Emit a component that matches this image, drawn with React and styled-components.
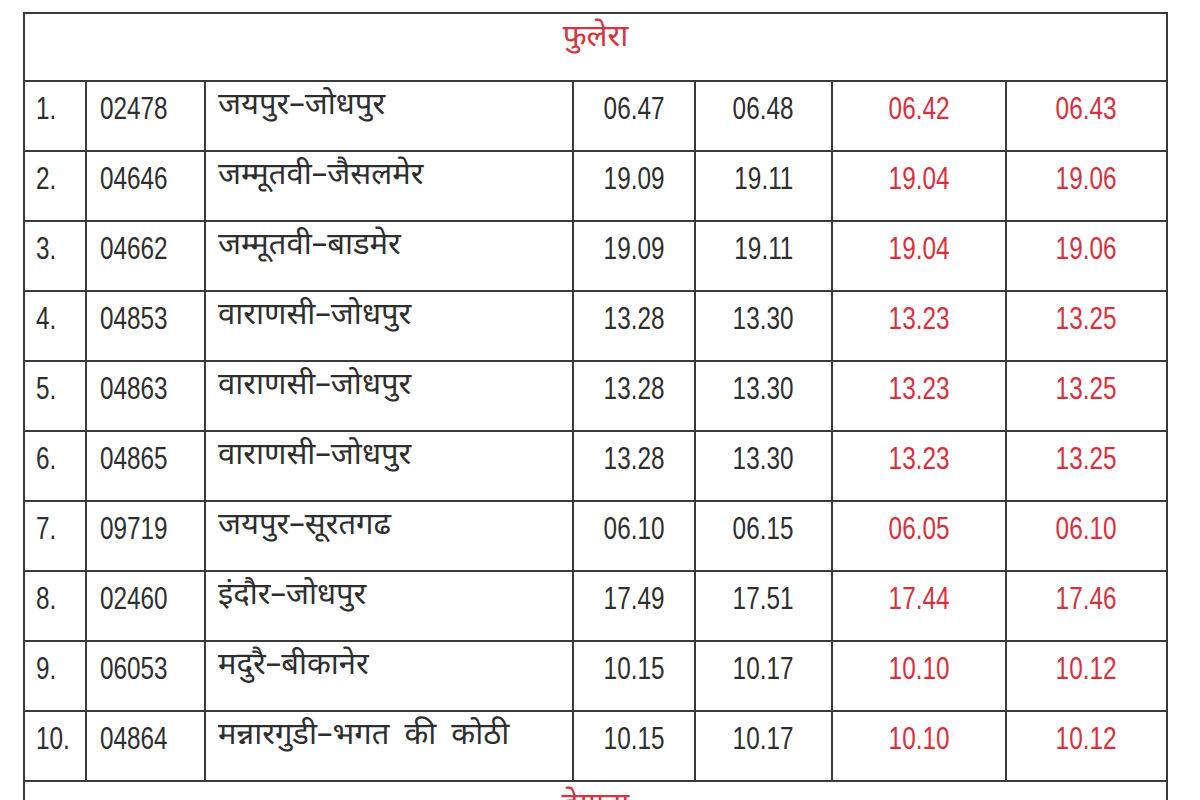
import styled, { createGlobalStyle } from "styled-components"

const GlobalStyle = createGlobalStyle`
    html, body {
        margin: 0;
        padding: 0;
        background: #ffffff;
        overflow: hidden;
    }
    body {
        font-family: "Liberation Sans", Arial, "Noto Sans Devanagari", "Noto Sans", sans-serif;
    }
`

const Page = styled.div`
    width: 1200px;
    height: 800px;
    padding: 12px 0 0 23px;
    box-sizing: border-box;
    overflow: hidden;
`

const Table = styled.table`
    width: 1145px;
    border-collapse: collapse;
    table-layout: fixed;
    color: #2a2a2a;
`

const HeadRow = styled.tr`
    height: 68px;
`

const StationCell = styled.td`
    border: 2px solid #3a3a3a;
    text-align: center;
    vertical-align: top;
    padding: 4px 0 0;
    color: #d7323e;
    font-size: 31px;
    font-family: "Noto Sans Devanagari", "Lohit Devanagari", "Mangal", "Noto Sans", sans-serif;
`

const Row = styled.tr`
    height: 70px;
`

const Cell = styled.td`
    border: 2px solid #3a3a3a;
    vertical-align: top;
    padding: ${(p) => (p.$pad ? `10px 0 0 ${p.$pad}px` : "10px 0 0")};
    text-align: ${(p) => (p.$center ? "center" : "left")};
    color: ${(p) => (p.$red ? "#d7303c" : "#2e2e2e")};
    white-space: nowrap;
`

/* the source print uses a condensed Arial, so squeeze the digits */
const Num = styled.span`
    display: inline-block;
    font-size: 32px;
    line-height: 32px;
    transform: scaleX(0.76);
    transform-origin: ${(p) => (p.$left ? "left center" : "center center")};
`

const NameCell = styled(Cell)`
    padding-top: 6px;
    font-size: 31px;
    line-height: 38px;
    word-spacing: 7px;
    font-family: "Noto Sans Devanagari", "Lohit Devanagari", "Mangal", "Noto Sans", sans-serif;
`

const rows = [
    ["1.", "02478", "जयपुर–जोधपुर", "06.47", "06.48", "06.42", "06.43"],
    ["2.", "04646", "जम्मूतवी–जैसलमेर", "19.09", "19.11", "19.04", "19.06"],
    ["3.", "04662", "जम्मूतवी–बाडमेर", "19.09", "19.11", "19.04", "19.06"],
    ["4.", "04853", "वाराणसी–जोधपुर", "13.28", "13.30", "13.23", "13.25"],
    ["5.", "04863", "वाराणसी–जोधपुर", "13.28", "13.30", "13.23", "13.25"],
    ["6.", "04865", "वाराणसी–जोधपुर", "13.28", "13.30", "13.23", "13.25"],
    ["7.", "09719", "जयपुर–सूरतगढ", "06.10", "06.15", "06.05", "06.10"],
    ["8.", "02460", "इंदौर–जोधपुर", "17.49", "17.51", "17.44", "17.46"],
    ["9.", "06053", "मदुरै–बीकानेर", "10.15", "10.17", "10.10", "10.12"],
    ["10.", "04864", "मन्नारगुडी–भगत की कोठी", "10.15", "10.17", "10.10", "10.12"],
]

const widths = [62, 119, 368, 122, 137, 174, 161]

export default function App() {
    return (
        <Page>
            <GlobalStyle />
            <Table>
                <colgroup>
                    {widths.map((w, i) => (
                        <col key={i} style={{ width: w }} />
                    ))}
                </colgroup>
                <tbody>
                    <HeadRow>
                        <StationCell colSpan={7}>फुलेरा</StationCell>
                    </HeadRow>
                    {rows.map((r) => (
                        <Row key={r[0]}>
                            <Cell $pad={11}><Num $left>{r[0]}</Num></Cell>
                            <Cell $pad={13}><Num $left>{r[1]}</Num></Cell>
                            <NameCell $pad={12}>{r[2]}</NameCell>
                            <Cell $center><Num>{r[3]}</Num></Cell>
                            <Cell $center><Num>{r[4]}</Num></Cell>
                            <Cell $center $red><Num>{r[5]}</Num></Cell>
                            <Cell $center $red><Num>{r[6]}</Num></Cell>
                        </Row>
                    ))}
                    <HeadRow>
                        <StationCell colSpan={7}>डेगाना</StationCell>
                    </HeadRow>
                </tbody>
            </Table>
        </Page>
    )
}
